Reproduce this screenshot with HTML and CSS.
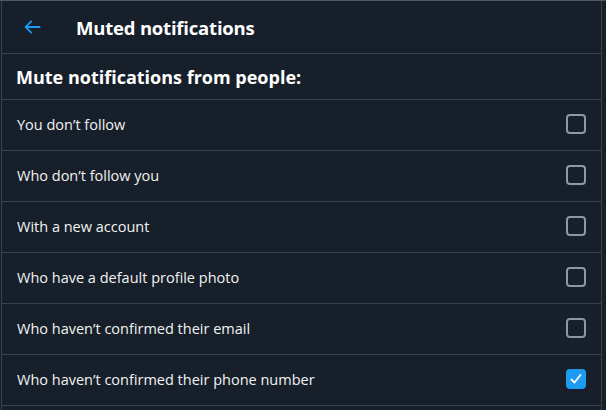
FILE: index.html
```html
<!DOCTYPE html>
<html lang="en">
<head>
<meta charset="utf-8">
<title>Muted notifications</title>
<link rel="stylesheet" href="styles.css">
</head>
<body>
<div class="panel">
  <header class="topbar">
    <button class="back" aria-label="Back">
      <svg viewBox="0 0 24 24" width="22" height="22"><path d="M7.414 13l5.043 5.04-1.414 1.42L3.586 12l7.457-7.46 1.414 1.42L7.414 11H21v2H7.414z" fill="#1d9bf0"/></svg>
    </button>
    <h1 class="title">Muted notifications</h1>
  </header>
  <h2 class="section">Mute notifications from people:</h2>
  <ul class="list">
    <li class="row"><span>You don’t follow</span><span class="box"></span></li>
    <li class="row"><span>Who don’t follow you</span><span class="box"></span></li>
    <li class="row"><span>With a new account</span><span class="box"></span></li>
    <li class="row"><span>Who have a default profile photo</span><span class="box"></span></li>
    <li class="row"><span>Who haven’t confirmed their email</span><span class="box"></span></li>
    <li class="row"><span>Who haven’t confirmed their phone number</span><span class="box checked"><svg viewBox="0 0 20 20" width="20" height="20"><path d="M5.5 10.5l3 3 6-7.5" fill="none" stroke="#fff" stroke-width="1.8" stroke-linecap="round" stroke-linejoin="round"/></svg></span></li>
  </ul>
</div>
</body>
</html>
```
FILE: styles.css
```css
html, body {
  margin: 0;
  padding: 0;
  background: #17202a;
  height: 100%;
}
body {
  border-top: 1px solid #555a60;
  box-sizing: border-box;
  font-family: "Open Sans", "DejaVu Sans", sans-serif;
  color: #ffffff;
}
.panel {
  margin-left: 1px;
  width: 599px;
  border-left: 1px solid #38444d;
  border-right: 1px solid #38444d;
  min-height: 100%;
}
.topbar {
  display: flex;
  align-items: center;
  height: 52px;
  border-bottom: 1px solid #38444d;
  padding-left: 19px;
}
.back {
  background: none;
  border: 0;
  padding: 0;
  width: 22px;
  height: 22px;
  display: flex;
  align-items: center;
  justify-content: center;
  margin-right: 33px;
}
.title {
  margin: 0;
  font-size: 18.5px;
  font-weight: 700;
  letter-spacing: -0.2px;
}
.section {
  margin: 0;
  height: 45px;
  display: flex;
  align-items: center;
  padding-left: 14px;
  font-size: 18px;
  font-weight: 700;
  border-bottom: 1px solid #38444d;
}
.list {
  list-style: none;
  margin: 0;
  padding: 0;
}
.row {
  display: flex;
  align-items: center;
  justify-content: space-between;
  box-sizing: border-box;
  height: 51px;
  padding: 0 15px 2px 15px;
  border-bottom: 1px solid #38444d;
  font-size: 14.5px;
  color: #f2f2f2;
}
.box {
  width: 20px;
  height: 20px;
  box-sizing: border-box;
  border: 2px solid #8b98a5;
  border-radius: 4px;
  display: flex;
}
.box.checked {
  background: #1d9bf0;
  border-color: #1d9bf0;
  align-items: center;
  justify-content: center;
}
.box.checked svg {
  flex: none;
}
```
